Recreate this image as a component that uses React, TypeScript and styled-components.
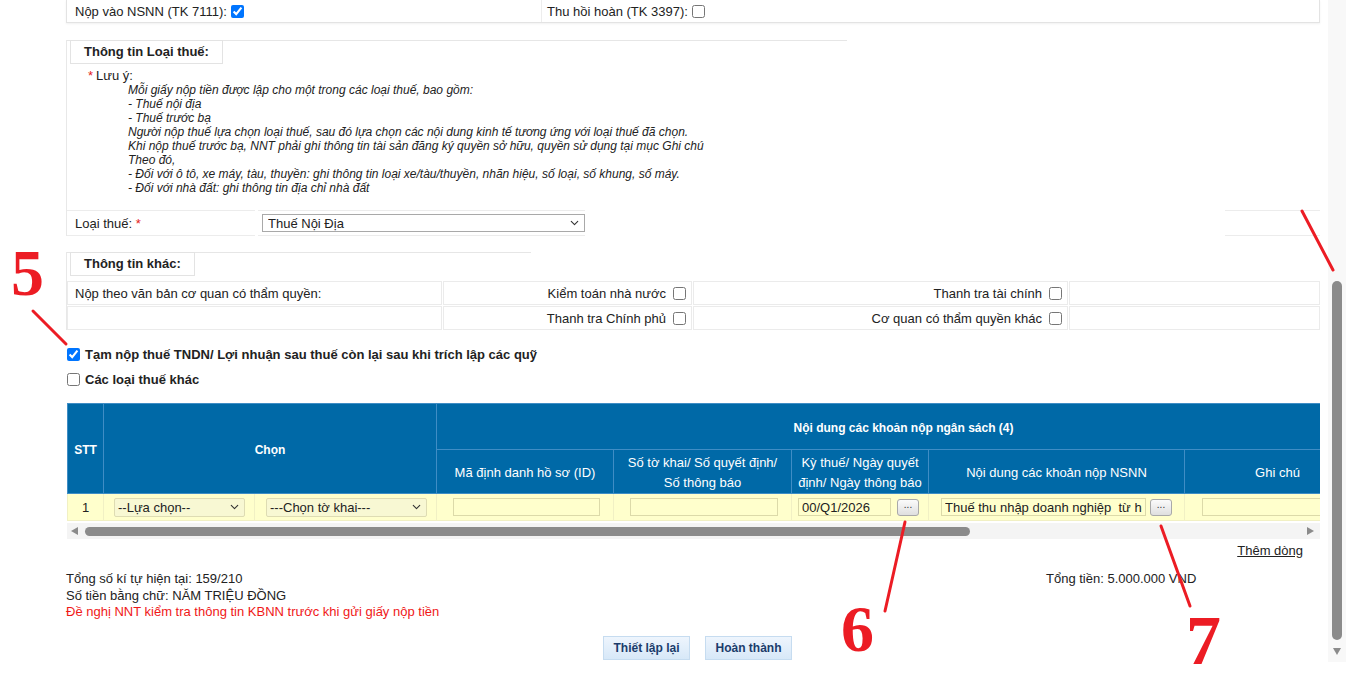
import styled, { createGlobalStyle } from "styled-components";
import { ChevronDown } from "lucide-react";

const GlobalStyle = createGlobalStyle`
  html, body {
    margin: 0;
    padding: 0;
    background: #fff;
  }
  body {
    font-family: "Liberation Sans", Arial, sans-serif;
    font-size: 13px;
    color: #222;
    overflow: hidden;
  }
  * {
    box-sizing: border-box;
  }
`;

const Shell = styled.div`
  position: relative;
  display: flex;
  width: 1366px;
  height: 679px;
  overflow: hidden;
`;

const Main = styled.main`
  width: 1328px;
  flex-shrink: 0;
  padding: 0 8px 0 66px;
`;

/* ---------- top account row ---------- */

const TopRow = styled.div`
  display: grid;
  grid-template-columns: 474px 1fr;
  height: 23px;
  border: 1px solid #e3e3e3;
  border-top: none;
  box-shadow: 0 1px 2px rgba(0, 0, 0, 0.06);
`;

const TopCell = styled.div`
  display: flex;
  align-items: center;
  padding-left: 8px;

  & + & {
    border-left: 1px solid #ededed;
    padding-left: 5px;
  }
`;

const Check = styled.input.attrs({ type: "checkbox" })<{ $gap?: number }>`
  width: 13px;
  height: 13px;
  margin: 0 0 0 ${(p) => p.$gap ?? 4}px;
  flex-shrink: 0;
`;

/* ---------- framed sections ---------- */

const Section = styled.section<{ $top: number; $rule: number }>`
  position: relative;
  margin-top: ${(p) => p.$top}px;
  border-left: 1px solid #e8e8e8;

  &::before {
    content: "";
    position: absolute;
    top: 0;
    left: 0;
    width: ${(p) => p.$rule}px;
    height: 1px;
    background: #e6e6e6;
  }
`;

const Legend = styled.h3`
  position: relative;
  display: block;
  width: fit-content;
  height: 24px;
  margin: -12px 0 0 3px;
  padding: 0 13px;
  border: 1px solid #e3e3e3;
  background: #fff;
  font-size: 13px;
  font-weight: bold;
  line-height: 22px;
`;

const NoteTitle = styled.div`
  margin-top: 5px;
  padding-left: 21px;
  line-height: 14px;
`;

const Req = styled.span`
  color: #e32020;
  margin-right: 3px;
`;

const NoteBody = styled.div`
  padding-left: 61px;
  font-size: 12px;
  font-style: italic;
  line-height: 14px;
`;

const TaxRow = styled.div`
  display: grid;
  grid-template-columns: 188px 327px 1fr 95px;
  column-gap: 3px;
  height: 26px;
  margin-top: 15px;
`;

const TaxCell = styled.div<{ $bare?: boolean; $inset?: number }>`
  display: flex;
  align-items: center;
  padding-left: ${(p) => (p.$bare ? 0 : p.$inset ?? 8)}px;
  border-top: 1px solid ${(p) => (p.$bare ? "transparent" : "#ececec")};
  border-bottom: 1px solid ${(p) => (p.$bare ? "transparent" : "#ececec")};
`;

const SelectWrap = styled.div<{ $w: number }>`
  position: relative;
  width: ${(p) => p.$w}px;
  flex-shrink: 0;

  svg {
    position: absolute;
    right: 4px;
    top: 50%;
    transform: translateY(-50%);
    pointer-events: none;
    color: #333;
  }
`;

const Select = styled.select<{ $tint?: boolean }>`
  appearance: none;
  width: 100%;
  height: ${(p) => (p.$tint ? 19 : 18)}px;
  padding: 0 18px 0 ${(p) => (p.$tint ? 3 : 5)}px;
  border: 1px solid ${(p) => (p.$tint ? "#dedcb3" : "#a9a9a9")};
  border-radius: ${(p) => (p.$tint ? 2 : 0)}px;
  background: ${(p) => (p.$tint ? "#f8f8d3" : "#fff")};
  font-family: "Liberation Sans", Arial, sans-serif;
  font-size: 13px;
  color: #222;
  outline: none;
`;

const OtherGrid = styled.div`
  display: grid;
  grid-template-columns: 375px 249px 375px 1fr;
  grid-auto-rows: 24px;
  gap: 1px;
  margin-top: 5px;
`;

const OtherCell = styled.div<{ $right?: boolean }>`
  display: flex;
  align-items: center;
  justify-content: ${(p) => (p.$right ? "flex-end" : "flex-start")};
  padding: 0 5px 0 7px;
  border: 1px solid #ebebeb;
`;

/* ---------- tax group checkboxes ---------- */

const CheckRow = styled.label<{ $first?: boolean }>`
  display: flex;
  align-items: center;
  gap: 5px;
  height: 25px;
  margin-top: ${(p) => (p.$first ? 12 : 0)}px;
  font-size: 13px;
  font-weight: bold;
`;

/* ---------- budget items table ---------- */

const TableClip = styled.div`
  width: 1253px;
  margin: 11px 0 0 1px;
  overflow: hidden;
`;

const Grid = styled.table`
  width: 1303px;
  border-collapse: collapse;
  table-layout: fixed;
`;

const Th = styled.th<{ $strong?: boolean }>`
  background: #0069a7;
  color: #fff;
  border: 1px solid #3f8dc5;
  padding: 2px 4px 0;
  font-size: ${(p) => (p.$strong ? 12 : 13)}px;
  font-weight: ${(p) => (p.$strong ? "bold" : "normal")};
  line-height: 20px;
  text-align: center;
`;

const Td = styled.td`
  height: 27px;
  padding: 0;
  background: #ffffcc;
  border: 1px solid #f1f0c4;
  text-align: center;
`;

const CellInner = styled.div<{ $pad: number; $gap?: number }>`
  display: flex;
  align-items: center;
  gap: ${(p) => p.$gap ?? 0}px;
  padding-left: ${(p) => p.$pad}px;
`;

const Field = styled.input<{ $w: number }>`
  width: ${(p) => p.$w}px;
  height: 18px;
  padding: 0 3px;
  border: 1px solid #dcdaa9;
  background: #ffffcc;
  font-family: "Liberation Sans", Arial, sans-serif;
  font-size: 13px;
  color: #222;
  outline: none;
  flex-shrink: 0;
`;

const DotButton = styled.button`
  width: 22px;
  height: 17px;
  padding: 0 0 5px;
  border: 1px solid #a9a9a9;
  border-radius: 3px;
  background: linear-gradient(#fbfbfb, #dfdfdf);
  font-family: "Liberation Sans", Arial, sans-serif;
  font-size: 10px;
  line-height: 10px;
  color: #333;
  flex-shrink: 0;
`;

const HScroll = styled.div`
  display: flex;
  align-items: center;
  width: 1253px;
  height: 16px;
  margin: 2px 0 0 1px;
  padding: 0 6px 0 4px;
  background: #f4f4f4;
`;

const Arrow = styled.span<{ $dir: "left" | "right" | "down" }>`
  width: 0;
  height: 0;
  flex-shrink: 0;
  border-style: solid;
  border-color: transparent;
  ${(p) =>
    p.$dir === "left"
      ? "border-width: 4.5px 7px 4.5px 0; border-right-color: #8b8b8b;"
      : p.$dir === "right"
      ? "border-width: 4.5px 0 4.5px 7px; border-left-color: #8b8b8b;"
      : "border-width: 7px 4.5px 0 4.5px; border-top-color: #8b8b8b;"}
`;

const HThumb = styled.div`
  width: 885px;
  height: 9px;
  margin-left: 7px;
  border-radius: 5px;
  background: #8b8b8b;
`;

const Spacer = styled.div`
  flex: 1;
`;

const AddRow = styled.div`
  display: flex;
  justify-content: flex-end;
  align-items: center;
  height: 20px;
  margin-top: 1px;
  padding-right: 17px;
`;

const AddLink = styled.a`
  color: #222;
  text-decoration: underline;
  cursor: pointer;
`;

const Totals = styled.div`
  display: grid;
  grid-template-columns: 980px 1fr;
  margin-top: 11px;
  line-height: 16.5px;
`;

const Warn = styled.div`
  color: #f01818;
`;

const Actions = styled.div`
  display: flex;
  justify-content: center;
  gap: 15px;
  margin-top: 15px;
  padding-left: 9px;
`;

const ActionButton = styled.button`
  width: 87px;
  height: 24px;
  border: 1px solid #c6dcf0;
  background: linear-gradient(#eef5fd, #d7e8f8);
  color: #1b3c6b;
  font-family: "Liberation Sans", Arial, sans-serif;
  font-size: 12px;
  font-weight: bold;
  cursor: pointer;
`;

/* ---------- page scrollbar ---------- */

const VScroll = styled.div`
  display: flex;
  flex-direction: column;
  align-items: center;
  width: 18px;
  height: 662px;
  padding-top: 281px;
  background: #f8f8f8;
  flex-shrink: 0;
`;

const VThumb = styled.div`
  width: 10px;
  height: 359px;
  border-radius: 5px;
  background: #8b8b8b;
`;

const DownArrow = styled(Arrow)`
  margin-top: 8px;
`;

/* ---------- red callouts ---------- */

const Marks = styled.svg`
  position: absolute;
  top: 0;
  left: 0;
  pointer-events: none;

  line {
    stroke: #ec1c24;
    stroke-width: 3;
    stroke-linecap: round;
  }

  text {
    fill: #ec1c24;
    font-family: "Liberation Serif", "Times New Roman", serif;
    font-weight: bold;
  }
`;

const notes = [
  "Mỗi giấy nộp tiền được lập cho một trong các loại thuế, bao gồm:",
  "- Thuế nội địa",
  "- Thuế trước bạ",
  "Người nộp thuế lựa chọn loại thuế, sau đó lựa chọn các nội dung kinh tế tương ứng với loại thuế đã chọn.",
  "Khi nộp thuế trước bạ, NNT phải ghi thông tin tài sản đăng ký quyền sở hữu, quyền sử dụng tại mục Ghi chú",
  "Theo đó,",
  "- Đối với ô tô, xe máy, tàu, thuyền: ghi thông tin loại xe/tàu/thuyền, nhãn hiệu, số loại, số khung, số máy.",
  "- Đối với nhà đất: ghi thông tin địa chỉ nhà đất",
];

const cols = [36, 151, 182, 177, 178, 137, 256, 186];

const App = () => {
  return (
    <>
      <GlobalStyle />
      <Shell>
        <Main>
          <TopRow>
            <TopCell>
              Nộp vào NSNN (TK 7111): <Check defaultChecked />
            </TopCell>
            <TopCell>
              Thu hồi hoàn (TK 3397): <Check />
            </TopCell>
          </TopRow>

          <Section $top={29} $rule={780}>
            <Legend>Thông tin Loại thuế:</Legend>
            <NoteTitle>
              <Req>*</Req>Lưu ý:
            </NoteTitle>
            <NoteBody>
              {notes.map((line) => (
                <div key={line}>{line}</div>
              ))}
            </NoteBody>
            <TaxRow>
              <TaxCell>
                Loại thuế:&nbsp;<Req>*</Req>
              </TaxCell>
              <TaxCell $inset={4}>
                <SelectWrap $w={323}>
                  <Select defaultValue="nd">
                    <option value="nd">Thuế Nội Địa</option>
                    <option value="tb">Thuế Trước Bạ</option>
                  </Select>
                  <ChevronDown size={13} strokeWidth={2} />
                </SelectWrap>
              </TaxCell>
              <TaxCell $bare />
              <TaxCell />
            </TaxRow>
          </Section>

          <Section $top={28} $rule={464}>
            <Legend>Thông tin khác:</Legend>
            <OtherGrid>
              <OtherCell>Nộp theo văn bản cơ quan có thẩm quyền:</OtherCell>
              <OtherCell $right>
                Kiểm toán nhà nước <Check $gap={7} />
              </OtherCell>
              <OtherCell $right>
                Thanh tra tài chính <Check $gap={7} />
              </OtherCell>
              <OtherCell />
              <OtherCell />
              <OtherCell $right>
                Thanh tra Chính phủ <Check $gap={7} />
              </OtherCell>
              <OtherCell $right>
                Cơ quan có thẩm quyền khác <Check $gap={7} />
              </OtherCell>
              <OtherCell />
            </OtherGrid>
          </Section>

          <CheckRow $first>
            <Check $gap={1} defaultChecked />
            Tạm nộp thuế TNDN/ Lợi nhuận sau thuế còn lại sau khi trích lập các quỹ
          </CheckRow>
          <CheckRow>
            <Check $gap={1} />
            Các loại thuế khác
          </CheckRow>

          <TableClip>
            <Grid>
              <colgroup>
                {cols.map((w, i) => (
                  <col key={i} style={{ width: w }} />
                ))}
              </colgroup>
              <thead>
                <tr style={{ height: 46 }}>
                  <Th $strong rowSpan={2}>
                    STT
                  </Th>
                  <Th $strong rowSpan={2} colSpan={2}>
                    Chọn
                  </Th>
                  <Th $strong colSpan={5}>
                    Nội dung các khoản nộp ngân sách (4)
                  </Th>
                </tr>
                <tr style={{ height: 44 }}>
                  <Th>Mã định danh hồ sơ (ID)</Th>
                  <Th>
                    Số tờ khai/ Số quyết định/
                    <br />
                    Số thông báo
                  </Th>
                  <Th>Kỳ thuế/ Ngày quyết định/ Ngày thông báo</Th>
                  <Th>Nội dung các khoản nộp NSNN</Th>
                  <Th>Ghi chú</Th>
                </tr>
              </thead>
              <tbody>
                <tr>
                  <Td>1</Td>
                  <Td>
                    <CellInner $pad={10}>
                      <SelectWrap $w={131}>
                        <Select $tint defaultValue="">
                          <option value="">--Lựa chọn--</option>
                        </Select>
                        <ChevronDown size={13} strokeWidth={2} />
                      </SelectWrap>
                    </CellInner>
                  </Td>
                  <Td>
                    <CellInner $pad={11}>
                      <SelectWrap $w={161}>
                        <Select $tint defaultValue="">
                          <option value="">---Chọn tờ khai---</option>
                        </Select>
                        <ChevronDown size={13} strokeWidth={2} />
                      </SelectWrap>
                    </CellInner>
                  </Td>
                  <Td>
                    <CellInner $pad={16}>
                      <Field $w={147} />
                    </CellInner>
                  </Td>
                  <Td>
                    <CellInner $pad={16}>
                      <Field $w={148} />
                    </CellInner>
                  </Td>
                  <Td>
                    <CellInner $pad={6} $gap={6}>
                      <Field $w={93} defaultValue="00/Q1/2026" />
                      <DotButton>...</DotButton>
                    </CellInner>
                  </Td>
                  <Td>
                    <CellInner $pad={12} $gap={4}>
                      <Field
                        $w={205}
                        defaultValue="Thuế thu nhập doanh nghiệp  từ hoạt động sản xuất kinh doanh"
                      />
                      <DotButton>...</DotButton>
                    </CellInner>
                  </Td>
                  <Td>
                    <CellInner $pad={17}>
                      <Field $w={160} />
                    </CellInner>
                  </Td>
                </tr>
              </tbody>
            </Grid>
          </TableClip>

          <HScroll>
            <Arrow $dir="left" />
            <HThumb />
            <Spacer />
            <Arrow $dir="right" />
          </HScroll>

          <AddRow>
            <AddLink>Thêm dòng</AddLink>
          </AddRow>

          <Totals>
            <div>
              <div>Tổng số kí tự hiện tại: 159/210</div>
              <div>Số tiền bằng chữ: NĂM TRIỆU ĐỒNG</div>
              <Warn>Đề nghị NNT kiểm tra thông tin KBNN trước khi gửi giấy nộp tiền</Warn>
            </div>
            <div>Tổng tiền: 5.000.000 VND</div>
          </Totals>

          <Actions>
            <ActionButton>Thiết lập lại</ActionButton>
            <ActionButton>Hoàn thành</ActionButton>
          </Actions>
        </Main>

        <VScroll>
          <VThumb />
          <DownArrow $dir="down" />
        </VScroll>

        <Marks width={1366} height={679} viewBox="0 0 1366 679">
          <line x1={33} y1={311} x2={66} y2={344} />
          <line x1={1302} y1={211} x2={1333} y2={270} />
          <line x1={905} y1={522} x2={885} y2={611} />
          <line x1={1161} y1={526} x2={1190} y2={606} />
          <text x={11} y={295} fontSize={66}>
            5
          </text>
          <text x={841} y={651} fontSize={66}>
            6
          </text>
          <text x={1186} y={664} fontSize={70}>
            7
          </text>
        </Marks>
      </Shell>
    </>
  );
};

export default App;
